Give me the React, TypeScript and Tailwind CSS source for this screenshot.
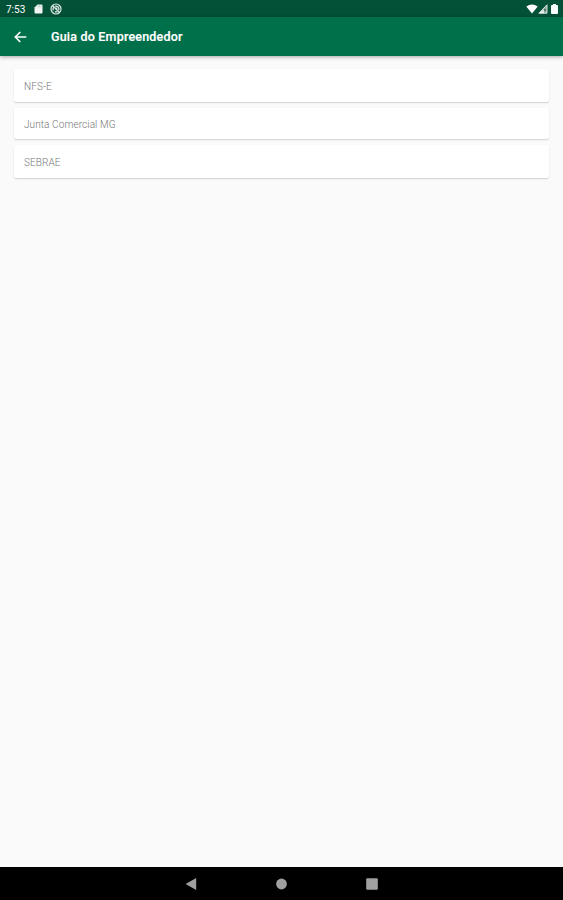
const links = [
  { label: 'NFS-E', size: 'h-[33px]' },
  { label: 'Junta Comercial MG', size: 'h-[31px]' },
  { label: 'SEBRAE', size: 'h-[33px]' },
];

function StatusBar() {
  return (
    <div className="flex h-[17px] items-center bg-[#035238] pl-[6px] pr-[5px] text-white">
      <span className="mt-[2px] w-[28px] text-[10px] leading-none">7:53</span>
      {/* SD card */}
      <svg className="mt-[1px]" width="9" height="10" viewBox="0 0 8 10" fill="#f1f5f2">
        <path d="M3 .5h4q1 0 1 1v7q0 1-1 1H1q-1 0-1-1V3.5z" />
        <path d="M3.3 1.5v1.7M5 1.5v1.7M6.6 1.5v1.7" stroke="#8caf9f" strokeWidth=".6" />
      </svg>
      {/* Sync disabled */}
      <svg className="ml-[7px] mt-[1px]" width="12" height="12" viewBox="0 0 12 12" fill="none" stroke="#dce8e1">
        <circle cx="6" cy="6" r="5" strokeWidth="1.2" />
        <path d="M2.5 2.5l7 7M3.3 7.5a3 3 0 0 1 .2-3M5 3.2a3 3 0 0 1 3.7 3.9M4.8 8.6a3 3 0 0 0 2.5 0" strokeWidth="1.3" />
        <circle cx="6.4" cy="5.6" r="1" fill="#dce8e1" stroke="none" />
      </svg>
      <div className="ml-auto mt-[1px] flex items-center">
        <svg width="12" height="10" viewBox="0 0 12 10" fill="white">
          <path d="M.3 2.6Q6-1.6 11.7 2.6L6 9.5z" />
        </svg>
        <svg width="10" height="10" viewBox="0 0 10 10">
          <path d="M9 .8v8.4H.8z" fill="#8cac9c" stroke="#e5eee9" strokeWidth=".9" />
          <path d="M5.8 5.2v4H1.5z" fill="#edf4f0" />
          <path d="M6.2 5l2 2M8.2 5l-2 2" stroke="#35634f" strokeWidth=".8" />
        </svg>
        <svg className="ml-[3px]" width="7" height="10" viewBox="0 0 7 10" fill="#fafffb">
          <path d="M2 0h3v1h1q1 0 1 1v7q0 1-1 1H1q-1 0-1-1V2q0-1 1-1h1z" />
        </svg>
      </div>
    </div>
  );
}

function Header() {
  return (
    <header className="relative z-10 flex h-[39px] items-center bg-[#00704b] pl-[14px] text-white shadow-[0_1px_4px_rgba(0,0,0,0.35)]">
      <svg width="13" height="12" viewBox="0 0 13 12" fill="none" stroke="white" strokeWidth="1.6">
        <path d="M12.3 6H1.3M6.3 1L1.3 6l5 5" />
      </svg>
      <h1 className="ml-[24px] mt-[2px] whitespace-nowrap text-[12.5px] font-medium leading-none tracking-[0.2px] [-webkit-text-stroke:0.2px_white]">
        Guia do Empreendedor
      </h1>
    </header>
  );
}

export default function App() {
  return (
    <div className="flex h-[900px] w-[563px] flex-col overflow-hidden bg-[#fafafa] font-['Roboto',sans-serif]">
      <StatusBar />
      <Header />

      {/* Links */}
      <main className="flex flex-1 flex-col gap-[6px] px-[14px] pt-[13px]">
        {links.map((link) => (
          <div
            key={link.label}
            className={`${link.size} flex shrink-0 items-center rounded-[2px] bg-white pl-[10px] pt-[2px] shadow-[0_1px_1.5px_rgba(0,0,0,0.16)]`}
          >
            <span className="text-[10px] font-light leading-none tracking-[0.1px] text-[#777777]">{link.label}</span>
          </div>
        ))}
      </main>

      {/* Navigation bar */}
      <nav className="flex h-[33px] items-center justify-center gap-[79px] bg-black">
        <svg width="12" height="12" viewBox="0 0 12 12" fill="#a0a0a0">
          <path d="M11.2 0v12L.6 6z" />
        </svg>
        <svg width="11" height="12" viewBox="0 0 11 12" fill="#a0a0a0">
          <circle cx="5.5" cy="6" r="5.4" />
        </svg>
        <svg width="12" height="12" viewBox="0 0 12 12" fill="#a0a0a0">
          <rect x=".2" y=".2" width="11.6" height="11.6" rx="1" />
        </svg>
      </nav>
    </div>
  );
}
